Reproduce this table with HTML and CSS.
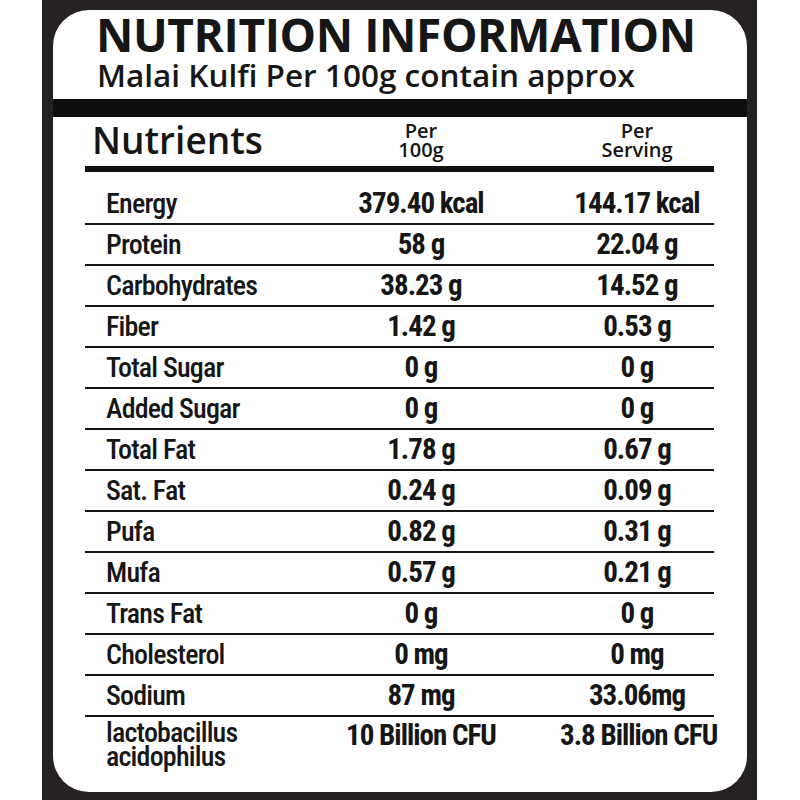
FILE: index.html
```html
<!DOCTYPE html>
<html lang="en">
<head>
<meta charset="utf-8">
<title>Nutrition Information</title>
<link rel="stylesheet" href="styles.css">
</head>
<body>
<div class="frame">
  <div class="panel">
    <header class="head">
      <h1 class="title">NUTRITION INFORMATION</h1>
      <p class="subtitle">Malai Kulfi Per 100g contain approx</p>
    </header>
    <div class="band"></div>
    <div class="table">
      <div class="thead">
        <div class="th-name">Nutrients</div>
        <div class="th-col">Per<br>100g</div>
        <div class="th-col">Per<br>Serving</div>
      </div>
      <div class="row first"><div class="name">Energy</div><div class="val">379.40 kcal</div><div class="val">144.17 kcal</div></div>
      <div class="row"><div class="name">Protein</div><div class="val">58 g</div><div class="val">22.04 g</div></div>
      <div class="row"><div class="name">Carbohydrates</div><div class="val">38.23 g</div><div class="val">14.52 g</div></div>
      <div class="row"><div class="name">Fiber</div><div class="val">1.42 g</div><div class="val">0.53 g</div></div>
      <div class="row"><div class="name">Total Sugar</div><div class="val">0 g</div><div class="val">0 g</div></div>
      <div class="row"><div class="name">Added Sugar</div><div class="val">0 g</div><div class="val">0 g</div></div>
      <div class="row"><div class="name">Total Fat</div><div class="val">1.78 g</div><div class="val">0.67 g</div></div>
      <div class="row"><div class="name">Sat. Fat</div><div class="val">0.24 g</div><div class="val">0.09 g</div></div>
      <div class="row"><div class="name">Pufa</div><div class="val">0.82 g</div><div class="val">0.31 g</div></div>
      <div class="row"><div class="name">Mufa</div><div class="val">0.57 g</div><div class="val">0.21 g</div></div>
      <div class="row"><div class="name">Trans Fat</div><div class="val">0 g</div><div class="val">0 g</div></div>
      <div class="row"><div class="name">Cholesterol</div><div class="val">0 mg</div><div class="val">0 mg</div></div>
      <div class="row"><div class="name">Sodium</div><div class="val">87 mg</div><div class="val">33.06mg</div></div>
      <div class="row last"><div class="name">lactobacillus<br>acidophilus</div><div class="val">10 Billion CFU</div><div class="val">3.8 Billion CFU</div></div>
    </div>
  </div>
</div>
</body>
</html>
```
FILE: styles.css
```css
* { box-sizing: border-box; }
html, body { margin: 0; padding: 0; background: #ffffff; }
body { width: 800px; height: 800px; overflow: hidden; color: #161616; }

.frame {
  margin-left: 42px;
  width: 715px;
  height: 800px;
  background: #262122;
  padding: 10px 10px 8px 11px;
}
.panel {
  height: 782px;
  background: #ffffff;
  border-radius: 36px;
  overflow: hidden;
}

.head {
  height: 89px;
  padding: 1px 0 0 43px;
  font-family: "Open Sans", "Liberation Sans", sans-serif;
}
.title {
  margin: -3px 0 0;
  font-size: 46px;
  line-height: 52px;
  font-weight: 700;
  letter-spacing: -0.4px;
  white-space: nowrap;
}
.subtitle {
  margin: -2px 0 0 1px;
  font-size: 31.5px;
  line-height: 34px;
  font-weight: 600;
  white-space: nowrap;
}

.band {
  height: 18px;
  background: #0e0e0e;
}

.table {
  margin: 0 33px 0 32px;
}
.thead, .row {
  display: grid;
  grid-template-columns: 197px 278px 154px;
}
.thead {
  height: 55px;
  padding-top: 3px;
  border-bottom: 6px solid #111111;
  font-family: "Open Sans", "Liberation Sans", sans-serif;
  font-weight: 600;
}
.th-name {
  padding-left: 7px;
  font-size: 37px;
  line-height: 40px;
}
.th-col {
  padding-top: 1px;
  text-align: center;
  font-size: 20px;
  line-height: 19px;
}

.row {
  height: 41px;
  border-bottom: 2px solid #161616;
  font-family: "Roboto Condensed", "Liberation Sans", sans-serif;
  font-size: 28px;
  line-height: 39px;
}
.row.first {
  height: 53px;
  padding-top: 12px;
}
.row.last {
  height: auto;
  border-bottom: none;
  padding-top: 4px;
}
.row.last .name { line-height: 24px; }
.row.last .val { line-height: 28px; }
.name {
  padding-left: 21px;
  white-space: nowrap;
  font-weight: 500;
  letter-spacing: -0.8px;
}
.val {
  text-align: center;
  font-size: 29px;
  font-weight: 700;
  white-space: nowrap;
  letter-spacing: -1px;
}
```
